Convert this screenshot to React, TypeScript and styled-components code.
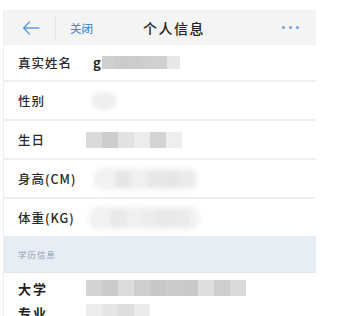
import React from "react";
import styled, { createGlobalStyle } from "styled-components";

const Global = createGlobalStyle`
  html, body { margin: 0; padding: 0; background: #fff; }
  body { font-family: "Noto Sans CJK SC", "Noto Sans", sans-serif; overflow: hidden; }
`;

const Page = styled.div`
  width: 312px;
  margin: 10px 0 0 3px;
  border-left: 1px solid #ececec;
  height: 306px;
  overflow: hidden;
`;

const Header = styled.div`
  height: 35px;
  background: #f4f4f4;
  display: flex;
  align-items: center;
`;

const BackBtn = styled.div`
  width: 49px;
  height: 24px;
  display: flex;
  align-items: center;
  justify-content: center;
  border-right: 1px solid #e6e6e6;
  padding-left: 2px;
`;

const Close = styled.span`
  font-size: 11.5px;
  color: #4a8ed8;
  margin-left: 14px;
  font-weight: 500;
`;

const Title = styled.span`
  font-size: 14px;
  color: #222;
  margin-left: 50px;
  font-weight: 500;
  letter-spacing: 1.5px;
  flex: 1;
`;

const Dots = styled.div`
  display: flex;
  gap: 4px;
  margin-right: 17px;
  span {
    width: 3px;
    height: 3px;
    border-radius: 50%;
    background: #6aa3e0;
  }
`;

const Row = styled.div<{ $h: number; $line?: boolean }>`
  height: ${(p) => p.$h}px;
  box-sizing: border-box;
  border-bottom: ${(p) => (p.$line ? "2px solid #efefef" : "none")};
  display: flex;
  align-items: center;
  padding-left: 14px;
`;

const Label = styled.span<{ $w?: number }>`
  width: ${(p) => p.$w ?? 68}px;
  flex: none;
  font-size: 12.5px;
  color: #2a2a2a;
  font-weight: 500;
  letter-spacing: 1px;
`;

const Value = styled.div`
  display: flex;
  align-items: center;
  position: relative;
`;

const G = styled.span`
  font-size: 13px;
  color: #222;
  font-weight: 600;
  margin-right: 1px;
`;

const Mosaic = styled.div<{ $cell: number; $rows?: number }>`
  display: grid;
  grid-auto-flow: column;
  grid-auto-columns: ${(p) => p.$cell}px;
  grid-template-rows: repeat(${(p) => p.$rows ?? 1}, ${(p) => p.$cell}px);
  filter: blur(0.6px);
`;

const Cell = styled.div<{ $c: string }>`
  background: ${(p) => p.$c};
`;

const Halo = styled.div<{ $w: number; $h: number; $c: string }>`
  width: ${(p) => p.$w}px;
  height: ${(p) => p.$h}px;
  border-radius: ${(p) => p.$h / 2}px;
  background: ${(p) => p.$c};
  filter: blur(2px);
  display: flex;
  align-items: center;
  padding: 0 6px;
  box-sizing: border-box;
`;

const Section = styled.div`
  height: 37px;
  background: #e8edf4;
  border-bottom: 1px solid #dfe5ee;
  box-sizing: border-box;
  display: flex;
  align-items: center;
  padding-left: 14px;
  font-size: 8.5px;
  color: #8b9bb2;
  letter-spacing: 1px;
`;

const EduBlock = styled.div`
  display: grid;
  grid-template-columns: 68px 1fr;
  grid-template-rows: 24px 24px;
  padding: 3px 0 0 14px;
  align-items: center;
`;

const EduLabel = styled.span`
  font-size: 13px;
  color: #1f1f1f;
  font-weight: 600;
  letter-spacing: 2px;
`;

const mk = (arr: string[]) => arr.map((c, i) => <Cell key={i} $c={c} />);

export default function App() {
  return (
    <>
      <Global />
      <Page>
        <Header>
          <BackBtn>
            <svg width="18" height="14" viewBox="0 0 18 14" fill="none" stroke="#5b9be0" strokeWidth="1.3" strokeLinecap="round" strokeLinejoin="round">
              <path d="M17 7H1.5M7.5 1L1.5 7l6 6" />
            </svg>
          </BackBtn>
          <Close>关闭</Close>
          <Title>个人信息</Title>
          <Dots>
            <span />
            <span />
            <span />
          </Dots>
        </Header>

        <Row $h={37} $line>
          <Label>真实姓名</Label>
          <Value style={{ marginLeft: 7 }}>
            <G>g</G>
            <Mosaic $cell={13}>
              {mk(["#cfcfcf", "#cbcbcb", "#cdcdcd", "#cfcfcf", "#d0d0d0", "#e8e8e8"])}
            </Mosaic>
          </Value>
        </Row>

        <Row $h={39} $line>
          <Label>性别</Label>
          <Value style={{ marginLeft: 5 }}>
            <Halo $w={26} $h={18} $c="#eeeeee" />
          </Value>
        </Row>

        <Row $h={39} $line>
          <Label>生日</Label>
          <Value style={{ marginLeft: 0 }}>
            <Mosaic $cell={16}>
              {mk(["#dadada", "#cdcdcd", "#e2e2e2", "#ececec", "#d4d4d4", "#eeeeee"])}
            </Mosaic>
          </Value>
        </Row>

        <Row $h={39} $line>
          <Label>身高(CM)</Label>
          <Value style={{ marginLeft: 7 }}>
            <Halo $w={105} $h={22} $c="#f2f2f2">
              <Mosaic $cell={16}>
                {mk(["#f2f2f2", "#e6e6e6", "#f0f0f0", "#e8e8e8", "#e6e6e6", "#ebebeb"])}
              </Mosaic>
            </Halo>
          </Value>
        </Row>

        <Row $h={37}>
          <Label>体重(KG)</Label>
          <Value style={{ marginLeft: 2 }}>
            <Halo $w={112} $h={24} $c="#f3f3f3">
              <Mosaic $cell={16}>
                {mk(["#f2f2f2", "#e8e8e8", "#f0f0f0", "#ececec", "#e8e8e8", "#eaeaea"])}
              </Mosaic>
            </Halo>
          </Value>
        </Row>

        <Section>学历信息</Section>

        <EduBlock>
          <EduLabel>大学</EduLabel>
          <Mosaic $cell={16}>
            {mk(["#d2d2d2", "#cbcbcb", "#dcdcdc", "#cecece", "#c8c8c8", "#cbcbcb", "#c9c9c9", "#dddddd", "#cecece", "#dadada"])}
          </Mosaic>
          <EduLabel>专业</EduLabel>
          <Mosaic $cell={16}>
            {mk(["#ececec", "#e6e6e6", "#dedede", "#ebebeb"])}
          </Mosaic>
        </EduBlock>
      </Page>
    </>
  );
}
